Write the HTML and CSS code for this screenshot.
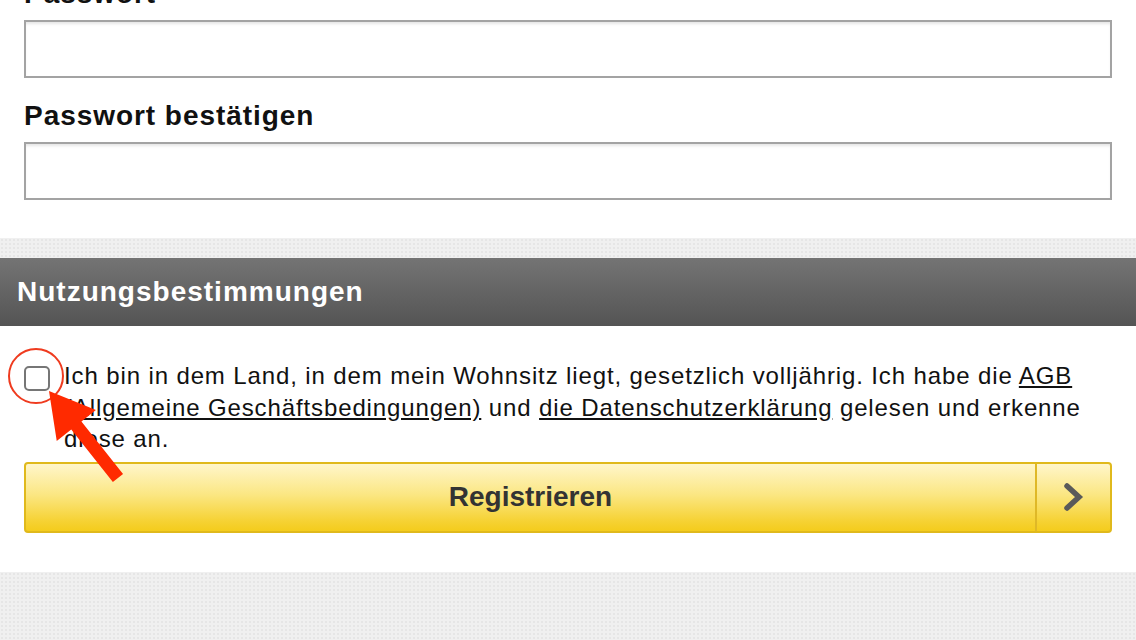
FILE: index.html
```html
<!DOCTYPE html>
<html lang="de">
<head>
    <meta charset="UTF-8">
    <meta name="viewport" content="width=device-width, initial-scale=1.0">
    <title>Registrieren</title>
    <link rel="stylesheet" href="styles.css">
</head>
<body>
    <div class="form">
        <div class="field">
            <label class="field-label">Passwort</label>
            <input class="text-input" type="password">
        </div>
        <div class="field">
            <label class="field-label">Passwort bestätigen</label>
            <input class="text-input" type="password">
        </div>
    </div>

    <div class="spacer"></div>

    <div class="section-header">Nutzungsbestimmungen</div>

    <div class="terms">
        <div class="consent">
            <span class="checkbox"></span>
            <p class="consent-text">Ich bin in dem Land, in dem mein Wohnsitz liegt, gesetzlich volljährig. Ich habe die <a href="#">AGB (Allgemeine Geschäftsbedingungen)</a> und <a href="#">die Datenschutzerklärung</a> gelesen und erkenne diese an.</p>
        </div>

        <button class="submit">
            <span class="submit-text">Registrieren</span>
            <span class="submit-arrow">
                <svg width="22" height="30" viewBox="0 0 22 30">
                    <path d="M4 4 L16 15 L4 26" fill="none" stroke="#5a5a5a" stroke-width="5.5" stroke-linecap="round" stroke-linejoin="miter"/>
                </svg>
            </span>
        </button>

        <!-- annotation drawn over the checkbox -->
        <svg class="annotation" width="140" height="170" viewBox="0 0 140 170">
            <circle cx="36" cy="50" r="27" fill="none" stroke="#ef3b1f" stroke-width="2"/>
            <polygon transform="translate(49,65) rotate(-128.4)" points="0,0 -44,-25 -44,-6.5 -111,-6.5 -111,6.5 -44,6.5 -44,25" fill="#ff2a00"/>
        </svg>
    </div>

    <div class="spacer bottom"></div>
</body>
</html>
```

FILE: styles.css
```css
body {
    font-family: "Liberation Sans", Arial, Helvetica, sans-serif;
    margin: 0;
    background-color: white;
    color: #111;
    overflow: hidden;
}

.form {
    margin-top: -22px;
    padding: 0 24px 38px;
    display: flex;
    flex-direction: column;
    gap: 22px;
}

.field {
    display: flex;
    flex-direction: column;
    gap: 10px;
}

.field-label {
    font-size: 28px;
    font-weight: bold;
    line-height: 32px;
    letter-spacing: 0.95px;
    color: #111;
}

.text-input {
    box-sizing: border-box;
    height: 58px;
    width: 100%;
    margin: 0;
    border: 2px solid #a3a3a3;
    border-radius: 0;
    background: white;
    box-shadow: inset 0 3px 3px -1px rgba(0, 0, 0, 0.1);
    outline: none;
}

/* dotted grey bands */
.spacer {
    height: 20px;
    background-color: #f0f0f0;
    background-image: radial-gradient(#e6e6e6 0.8px, transparent 1px);
    background-size: 4px 4px;
}

.spacer.bottom {
    height: 68px;
}

.section-header {
    height: 68px;
    line-height: 68px;
    padding: 0 17px;
    font-size: 28px;
    font-weight: bold;
    letter-spacing: 1px;
    color: white;
    background: linear-gradient(to bottom, #747474, #545454);
}

.terms {
    position: relative;
    padding: 34px 24px 39px;
}

.consent {
    display: flex;
    align-items: flex-start;
    gap: 14px;
}

.checkbox {
    flex: none;
    box-sizing: border-box;
    width: 26px;
    height: 25px;
    margin-top: 6px;
    border: 2px solid #767676;
    border-radius: 5px;
    background: white;
}

.consent-text {
    margin: 0;
    font-size: 24px;
    line-height: 31.5px;
    letter-spacing: 0.88px;
    color: #111;
}

.consent-text a {
    color: #111;
    text-decoration: underline;
}

.submit {
    box-sizing: border-box;
    margin-top: 7px;
    width: 100%;
    height: 71px;
    padding: 0;
    display: flex;
    border: 2px solid #e0b91c;
    border-radius: 4px;
    background: linear-gradient(to bottom, #fff6ca 0%, #fbe784 45%, #f6d234 85%, #f4cc1c 100%);
    font-family: inherit;
    cursor: pointer;
}

.submit-text {
    flex: 1;
    display: flex;
    align-items: center;
    justify-content: center;
    font-size: 28px;
    font-weight: bold;
    color: #333;
}

.submit-arrow {
    width: 73px;
    display: flex;
    align-items: center;
    justify-content: center;
    border-left: 2px solid #dfb827;
}

.annotation {
    position: absolute;
    top: 0;
    left: 0;
    pointer-events: none;
}
```
